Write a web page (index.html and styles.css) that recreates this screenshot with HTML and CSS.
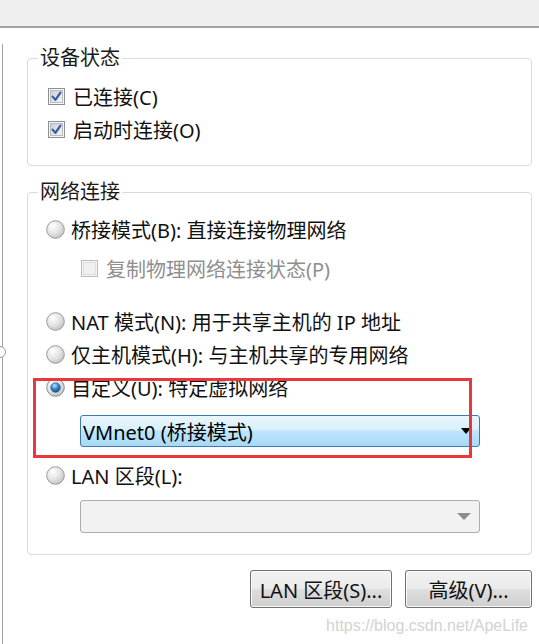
FILE: index.html
```html
<!DOCTYPE html>
<html lang="zh-CN">
<head>
<meta charset="utf-8">
<title>网络适配器</title>
<link rel="stylesheet" href="styles.css">
</head>
<body>
<svg class="defs" width="0" height="0" aria-hidden="true">
  <defs>
    <linearGradient id="cbfill" x1="0" y1="0" x2="1" y2="1">
      <stop offset="0" stop-color="#c9ced6"/>
      <stop offset="1" stop-color="#f6f6f6"/>
    </linearGradient>
    <radialGradient id="rdfill" cx="0.35" cy="0.3" r="0.8">
      <stop offset="0" stop-color="#ffffff"/>
      <stop offset="0.55" stop-color="#e2e2e2"/>
      <stop offset="1" stop-color="#bdbdbd"/>
    </radialGradient>
    <radialGradient id="rddot" cx="0.4" cy="0.3" r="0.75">
      <stop offset="0" stop-color="#bfe6ff"/>
      <stop offset="0.45" stop-color="#3f8fd6"/>
      <stop offset="1" stop-color="#13467f"/>
    </radialGradient>
  </defs>
</svg>
<div class="window">
  <div class="titlebar"></div>
  <div class="main">
    <div class="rail"><span class="thumb"></span></div>
    <div class="panel">
      <fieldset class="group g1">
        <legend>设备状态</legend>
        <div class="group-body">
          <div class="row">
            <svg class="cb" viewBox="0 0 17 17" width="17" height="17"><rect x="0.5" y="0.5" width="16" height="16" fill="#f6f6f6" stroke="#8e8f8f"/><rect x="2.5" y="2.5" width="12" height="12" fill="url(#cbfill)" stroke="#b8bcc2"/><path d="M4.6 8.6 L7.4 11.8 L12.4 4.6" fill="none" stroke="#3b5a9c" stroke-width="2.2" stroke-linecap="round" stroke-linejoin="round"/></svg>
            <span>已连接(C)</span>
          </div>
          <div class="row">
            <svg class="cb" viewBox="0 0 17 17" width="17" height="17"><rect x="0.5" y="0.5" width="16" height="16" fill="#f6f6f6" stroke="#8e8f8f"/><rect x="2.5" y="2.5" width="12" height="12" fill="url(#cbfill)" stroke="#b8bcc2"/><path d="M4.6 8.6 L7.4 11.8 L12.4 4.6" fill="none" stroke="#3b5a9c" stroke-width="2.2" stroke-linecap="round" stroke-linejoin="round"/></svg>
            <span>启动时连接(O)</span>
          </div>
        </div>
      </fieldset>

      <fieldset class="group g2">
        <legend>网络连接</legend>
        <div class="group-body">
          <div class="row r-bridge">
            <svg class="rd" viewBox="0 0 19 19" width="19" height="19"><circle cx="9.5" cy="9.5" r="8.8" fill="url(#rdfill)" stroke="#9a9a9a"/></svg>
            <span>桥接模式(B): 直接连接物理网络</span>
          </div>
          <div class="row r-sub disabled">
            <svg class="cb" viewBox="0 0 17 17" width="17" height="17"><rect x="0.5" y="0.5" width="16" height="16" fill="#f4f4f4" stroke="#bcbcbc"/><rect x="2.5" y="2.5" width="12" height="12" fill="#f0f0f0" stroke="#dedede"/></svg>
            <span>复制物理网络连接状态(P)</span>
          </div>
          <div class="row r-nat">
            <svg class="rd" viewBox="0 0 19 19" width="19" height="19"><circle cx="9.5" cy="9.5" r="8.8" fill="url(#rdfill)" stroke="#9a9a9a"/></svg>
            <span>NAT 模式(N): 用于共享主机的 IP 地址</span>
          </div>
          <div class="row">
            <svg class="rd" viewBox="0 0 19 19" width="19" height="19"><circle cx="9.5" cy="9.5" r="8.8" fill="url(#rdfill)" stroke="#9a9a9a"/></svg>
            <span>仅主机模式(H): 与主机共享的专用网络</span>
          </div>
          <div class="row">
            <svg class="rd" viewBox="0 0 19 19" width="19" height="19"><circle cx="9.5" cy="9.5" r="8.8" fill="url(#rdfill)" stroke="#8a8a8a"/><circle cx="9.5" cy="9.5" r="4.8" fill="url(#rddot)" stroke="#1d4f8a" stroke-width="0.6"/></svg>
            <span>自定义(U): 特定虚拟网络</span>
          </div>
          <div class="select active">
            <span>VMnet0 (桥接模式)</span>
            <span class="arrow"></span>
          </div>
          <div class="row r-lan">
            <svg class="rd" viewBox="0 0 19 19" width="19" height="19"><circle cx="9.5" cy="9.5" r="8.8" fill="url(#rdfill)" stroke="#9a9a9a"/></svg>
            <span>LAN 区段(L):</span>
          </div>
          <div class="select inactive">
            <span></span>
            <span class="arrow"></span>
          </div>
        </div>
      </fieldset>

      <div class="annot"></div>

      <div class="buttons">
        <button class="btn btn-lan" type="button">LAN 区段(S)...</button>
        <button class="btn btn-adv" type="button">高级(V)...</button>
      </div>
      <div class="watermark">https://blog.csdn.net/ApeLife</div>
    </div>
  </div>
</div>
</body>
</html>
```

FILE: styles.css
```css
html, body {
  margin: 0;
  padding: 0;
  background: #ffffff;
  overflow: hidden;
}
body {
  font-family: "Noto Sans", "Noto Sans CJK SC", sans-serif;
  font-size: 20px;
  color: #111;
}
.defs {
  position: absolute;
  width: 0;
  height: 0;
}
.window {
  width: 539px;
  height: 644px;
  display: flex;
  flex-direction: column;
}
.titlebar {
  height: 26px;
  background: #efefef;
  border-bottom: 2px solid #a4a4a4;
  flex: none;
}
.main {
  display: flex;
  flex: 1;
}
.rail {
  position: relative;
  width: 2px;
  margin-top: 16px;
  border-right: 1px solid #a2a2a2;
  flex: none;
}
.thumb {
  position: absolute;
  left: -6px;
  top: 302px;
  width: 10px;
  height: 10px;
  border: 1px solid #9a9a9a;
  border-radius: 50%;
  background: #fff;
}
.panel {
  position: relative;
  width: 505px;
  margin-left: 24px;
  margin-top: 20px;
}
.group {
  margin: 0;
  padding: 0;
  border: 1px solid #dadada;
  border-radius: 4px;
  min-width: 0;
}
.group legend {
  margin-left: 10px;
  padding: 0 2px;
  line-height: 20px;
  height: 20px;
  color: #1a1a1a;
}
.g1 .group-body {
  padding: 12px 0 19px 19px;
}
.g2 {
  margin-top: 16px;
}
.g2 .group-body {
  padding: 11px 0 21px 18px;
}
.row {
  height: 33px;
  display: flex;
  align-items: center;
  white-space: nowrap;
}
.row .cb {
  flex: none;
  margin-left: 1px;
  margin-right: 8px;
}
.row .rd {
  flex: none;
  margin-right: 6px;
}
.r-sub {
  margin-top: 6px;
  margin-left: 34px;
}
.disabled {
  color: #8f8f8f;
}
.r-nat {
  margin-top: 20px;
}
.select {
  box-sizing: border-box;
  width: 400px;
  margin-left: 34px;
  border-radius: 3px;
  display: flex;
  align-items: center;
  justify-content: space-between;
  padding: 0 8px 0 2px;
}
.select.active {
  height: 32px;
  margin-top: 11px;
  border: 1px solid #3d7bad;
  background: linear-gradient(to bottom, #eaf6fd 0%, #d9f0fc 45%, #bee6fd 50%, #a7d9f5 100%);
  color: #000;
}
.select.inactive {
  height: 33px;
  margin-top: 8px;
  border: 1px solid #adadad;
  background: #f2f2f2;
}
.arrow {
  width: 0;
  height: 0;
  border-left: 5px solid transparent;
  border-right: 5px solid transparent;
  border-top: 6px solid #000;
}
.select.inactive .arrow {
  border-left-width: 7px;
  border-right-width: 7px;
  border-top: 7px solid #8d8d8d;
}
.r-lan {
  margin-top: 12px;
}
.annot {
  position: absolute;
  left: 6px;
  top: 330px;
  width: 439px;
  height: 80px;
  box-sizing: border-box;
  border: 3px solid #e8383e;
  pointer-events: none;
}
.buttons {
  display: flex;
  justify-content: flex-end;
  gap: 13px;
  margin-top: 15px;
}
.btn {
  height: 38px;
  box-sizing: border-box;
  border: 1px solid #707070;
  border-radius: 3px;
  background: linear-gradient(to bottom, #f2f2f2 0%, #ebebeb 48%, #dddddd 52%, #cfcfcf 100%);
  font-family: "Noto Sans", "Noto Sans CJK SC", sans-serif;
  font-size: 20px;
  color: #111;
  padding: 0;
  box-shadow: inset 0 0 0 1px #fbfbfb;
}
.btn-lan {
  width: 142px;
}
.btn-adv {
  width: 127px;
}
.watermark {
  margin-top: 9px;
  text-align: right;
  padding-right: 4px;
  font-family: "Liberation Sans", Arial, sans-serif;
  font-size: 16px;
  line-height: 18px;
  color: #d2d2d2;
}
```
